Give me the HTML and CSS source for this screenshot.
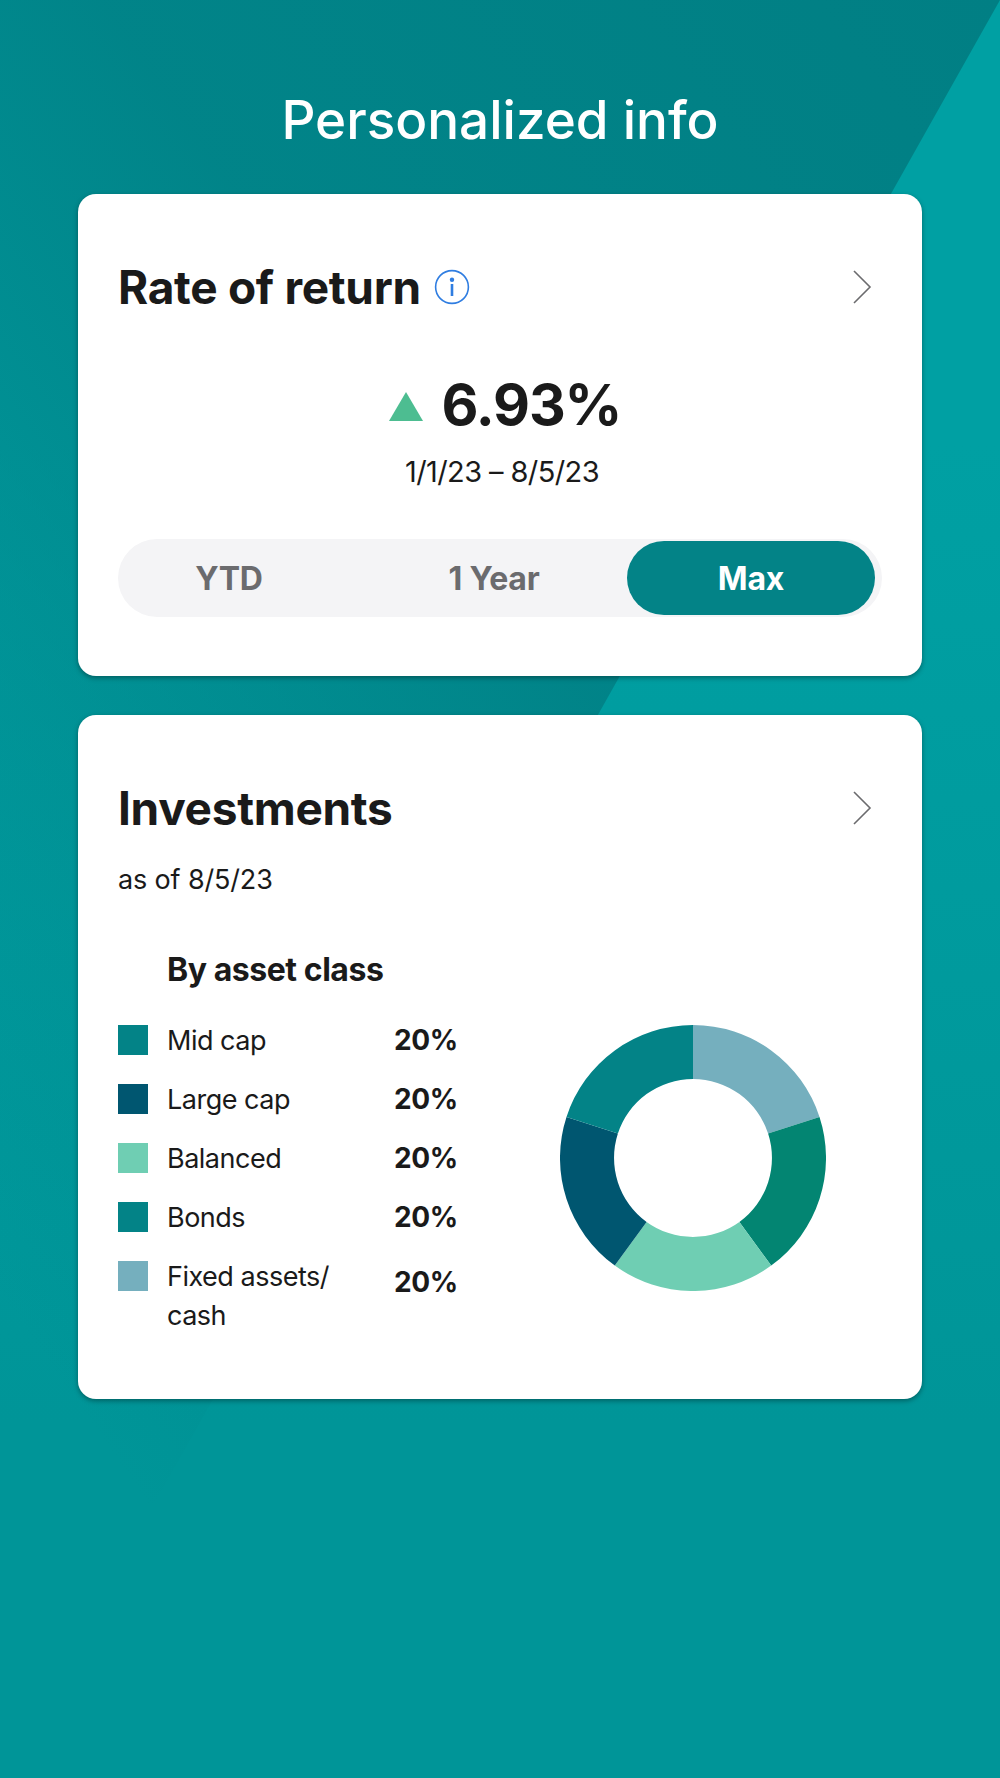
FILE: index.html
```html
<!DOCTYPE html>
<html>
<head>
  <meta charset="UTF-8">
  <title>Personalized info</title>
  <link rel="stylesheet" href="styles.css">
</head>
<body>

  <h1>Personalized info</h1>

  <section class="card card-return">
    <div class="card-head">
      <h2>Rate of return</h2>
      <svg class="info" width="36" height="36" viewBox="0 0 36 36">
        <circle cx="18" cy="18" r="16.4" fill="none" stroke="#2f7de1" stroke-width="1.6"/>
        <circle cx="18" cy="10.8" r="2.2" fill="#2f7de1"/>
        <rect x="16.7" y="15" width="2.6" height="12" fill="#2f7de1"/>
      </svg>
      <svg class="chevron" width="20" height="34" viewBox="0 0 20 34">
        <path d="M2 1 L18 17 L2 33" fill="none" stroke="#6b6b6e" stroke-width="1.6"/>
      </svg>
    </div>

    <div class="rate">
      <svg class="up" width="34" height="29" viewBox="0 0 34 29">
        <polygon points="17,0 34,29 0,29" fill="#4dbd91"/>
      </svg>
      <span class="rate-value">6.93%</span>
    </div>
    <p class="range">1/1/23 – 8/5/23</p>

    <div class="tabs">
      <div class="tab tab-first">YTD</div>
      <div class="tab tab-mid">1 Year</div>
      <div class="tab active">Max</div>
    </div>
  </section>

  <section class="card card-invest">
    <div class="card-head">
      <h2>Investments</h2>
      <svg class="chevron" width="20" height="34" viewBox="0 0 20 34">
        <path d="M2 1 L18 17 L2 33" fill="none" stroke="#6b6b6e" stroke-width="1.6"/>
      </svg>
    </div>
    <p class="asof">as of 8/5/23</p>

    <div class="invest-body">
      <div class="legend">
        <h3>By asset class</h3>
        <div class="row"><span class="swatch teal"></span><span class="name">Mid cap</span><span class="pct">20%</span></div>
        <div class="row"><span class="swatch navy"></span><span class="name">Large cap</span><span class="pct">20%</span></div>
        <div class="row"><span class="swatch mint"></span><span class="name">Balanced</span><span class="pct">20%</span></div>
        <div class="row"><span class="swatch teal"></span><span class="name">Bonds</span><span class="pct">20%</span></div>
        <div class="row row-tall"><span class="swatch sky"></span><span class="name">Fixed assets/<br>cash</span><span class="pct">20%</span></div>
      </div>
      <svg class="donut" width="266" height="266" viewBox="-133 -133 266 266">
        <path d="M0 -133 A133 133 0 0 1 126.5 -41.1 L75.1 -24.4 A79 79 0 0 0 0 -79 Z" fill="#75afbe"/>
        <path d="M126.5 -41.1 A133 133 0 0 1 78.2 107.6 L46.4 63.9 A79 79 0 0 0 75.1 -24.4 Z" fill="#038572"/>
        <path d="M78.2 107.6 A133 133 0 0 1 -78.2 107.6 L-46.4 63.9 A79 79 0 0 0 46.4 63.9 Z" fill="#6fceb3"/>
        <path d="M-78.2 107.6 A133 133 0 0 1 -126.5 -41.1 L-75.1 -24.4 A79 79 0 0 0 -46.4 63.9 Z" fill="#005670"/>
        <path d="M-126.5 -41.1 A133 133 0 0 1 0 -133 L0 -79 A79 79 0 0 0 -75.1 -24.4 Z" fill="#038387"/>
      </svg>
    </div>
  </section>

</body>
</html>
```

FILE: styles.css
```css
* { box-sizing: border-box; }
html { height: 100%; }
body {
  position: relative;
  min-height: 100%;
  margin: 0;
  padding: 0 78px;
  font-family: Inter, "Liberation Sans", sans-serif;
  color: #1a1a1a;
  background: linear-gradient(#00a0a3, #00a0a3 25%, #009598 80%);
}
/* darker diagonal wedge behind the cards, fades out towards the bottom left */
body::before {
  content: "";
  position: absolute;
  inset: 0;
  clip-path: polygon(0 0, 100% 0, 0 100%);
  background: linear-gradient(235deg, #017f84 0%, rgba(1, 127, 132, 0.85) 40%, rgba(1, 127, 132, 0.25) 70%, rgba(1, 127, 132, 0) 85%);
}
h1, .card { position: relative; }
h1 { margin: 0; padding-top: 88px; height: 194px; font-size: 53px; line-height: 65px; font-weight: 500; color: white; text-align: center; }
h2 { margin: 0; font-size: 46px; line-height: 54px; font-weight: 700; letter-spacing: -0.3px; }
h3 { margin: 0 0 36px 49px; font-size: 32px; line-height: 38px; font-weight: 700; letter-spacing: -0.45px; }
p { margin: 0; }

.card { background: white; border-radius: 18px; padding: 66px 40px 0; box-shadow: 0 2px 5px rgba(0, 0, 0, 0.35); }
.card-return { height: 482px; }
.card-invest { height: 684px; margin-top: 39px; }
.card-head { display: flex; align-items: center; height: 54px; }
.info { margin-left: 13px; }
.chevron { margin-left: auto; margin-right: 10px; }

.rate { display: flex; justify-content: center; align-items: center; gap: 19px; margin-top: 56px; height: 70px; padding-left: 10px; }
.up { margin-top: 2px; }
.rate-value { font-size: 57px; line-height: 70px; font-weight: 700; letter-spacing: -1.1px; }
.range { margin-top: 14px; padding-left: 4px; text-align: center; font-size: 29px; line-height: 36px; letter-spacing: -0.6px; }

.tabs { display: flex; align-items: center; height: 78px; margin-top: 49px; padding: 2px 7px 2px 0; border-radius: 39px; background: #f4f4f6; }
.tab { height: 74px; line-height: 76px; text-align: center; font-size: 32px; font-weight: 700; color: #6b6b6e; letter-spacing: -0.2px; border-radius: 37px; }
.tab-first { width: 222px; }
.tab-mid { flex: 1; padding-left: 21px; }
.tab.active { width: 248px; background: #038387; color: white; }

.asof { margin-top: 27px; font-size: 27px; line-height: 36px; letter-spacing: -0.15px; }
.invest-body { display: flex; margin-top: 53px; }
.legend { width: 340px; }
.row { display: flex; height: 59px; font-size: 27px; line-height: 30px; }
.row-tall { height: 80px; }
.swatch { flex: none; width: 30px; height: 30px; margin-right: 19px; }
.teal { background: #038387; }
.navy { background: #005670; }
.mint { background: #6fceb3; }
.sky { background: #75afbe; }
.name { width: 227px; line-height: 39px; margin-top: -4px; letter-spacing: -0.5px; }
.pct { font-size: 28px; font-weight: 700; line-height: 30px; letter-spacing: -0.3px; }
.row-tall .pct { margin-top: 6px; }
.donut { margin-left: 102px; margin-top: 74px; }
```
